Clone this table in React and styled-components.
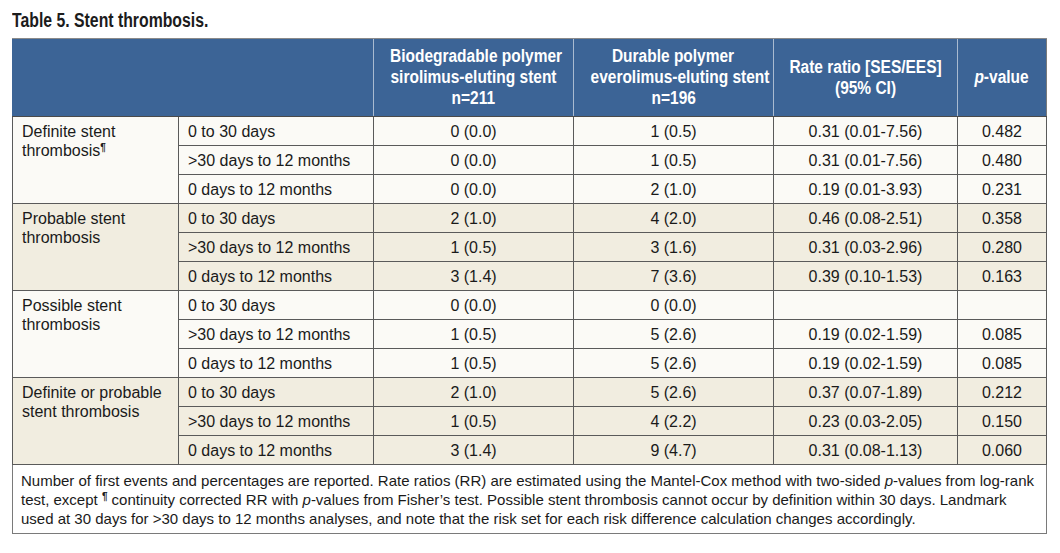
import React from "react";
import styled, { createGlobalStyle } from "styled-components";

const GlobalStyle = createGlobalStyle`
  html, body {
    margin: 0;
    padding: 0;
    background: #ffffff;
  }
  body {
    font-family: "Liberation Sans", Arial, sans-serif;
    color: #1a1a1a;
  }
`;

const Page = styled.div`
  width: 1060px;
  height: 553px;
  padding: 10px 12px 0 12px;
  box-sizing: border-box;
`;

const Title = styled.h1`
  margin: 0 0 7px 0;
  font-family: "Liberation Sans", Arial, sans-serif;
  font-weight: bold;
  font-size: 20px;
  line-height: 21px;
  color: #1c1c1c;
`;

// the source uses a condensed face; none is installed, so the text is squeezed
const Squeeze = styled.span`
  display: inline-block;
  white-space: nowrap;
  transform: scaleX(${(p) => p.$x || 0.86});
  transform-origin: ${(p) => (p.$origin === "left" ? "left center" : "center center")};
`;

const Table = styled.table`
  width: 1034px;
  border-collapse: collapse;
  table-layout: fixed;
  border: 1px solid #7a7a7a;
`;

const HeadCell = styled.th`
  background: #3c6496;
  color: #ffffff;
  height: 77px;
  padding: 0 2px;
  font-family: "Liberation Sans", Arial, sans-serif;
  font-weight: bold;
  font-size: 18px;
  line-height: 21px;
  text-align: center;
  vertical-align: middle;
  border-left: 1px solid ${(p) => (p.$noSep ? "#3c6496" : "#a9bad0")};
  border-bottom: 1px solid #4a4a4a;
  border-top: 1px solid #8a8a8a;
`;

const Cell = styled.td`
  background: ${(p) => (p.$shade ? "#f1ede0" : "#fbfaf6")};
  height: 28px;
  padding: 0 ${(p) => (p.$left ? "9px" : "4px")};
  font-size: 16px;
  line-height: 19px;
  text-align: ${(p) => (p.$left ? "left" : "center")};
  vertical-align: ${(p) => (p.$top ? "top" : "middle")};
  padding-top: ${(p) => (p.$top ? "5px" : "0")};
  border: 1px solid #5a5a5a;
  color: #1a1a1a;
`;

const Mark = styled.span`
  font-size: 10px;
  line-height: 1;
  position: relative;
  top: -5px;
  font-weight: bold;
`;

const Note = styled.td`
  background: #ffffff;
  border: 1px solid #7a7a7a;
  padding: 6px 8px 5px 8px;
  font-size: 15px;
  line-height: 19px;
  color: #1a1a1a;
`;

const periods = ["0 to 30 days", ">30 days to 12 months", "0 days to 12 months"];

const groups = [
  {
    label: (
      <>
        Definite stent
        <br />
        thrombosis<Mark>¶</Mark>
      </>
    ),
    rows: [
      ["0 (0.0)", "1 (0.5)", "0.31 (0.01-7.56)", "0.482"],
      ["0 (0.0)", "1 (0.5)", "0.31 (0.01-7.56)", "0.480"],
      ["0 (0.0)", "2 (1.0)", "0.19 (0.01-3.93)", "0.231"],
    ],
  },
  {
    label: (
      <>
        Probable stent
        <br />
        thrombosis
      </>
    ),
    rows: [
      ["2 (1.0)", "4 (2.0)", "0.46 (0.08-2.51)", "0.358"],
      ["1 (0.5)", "3 (1.6)", "0.31 (0.03-2.96)", "0.280"],
      ["3 (1.4)", "7 (3.6)", "0.39 (0.10-1.53)", "0.163"],
    ],
  },
  {
    label: (
      <>
        Possible stent
        <br />
        thrombosis
      </>
    ),
    rows: [
      ["0 (0.0)", "0 (0.0)", "", ""],
      ["1 (0.5)", "5 (2.6)", "0.19 (0.02-1.59)", "0.085"],
      ["1 (0.5)", "5 (2.6)", "0.19 (0.02-1.59)", "0.085"],
    ],
  },
  {
    label: (
      <>
        Definite or probable
        <br />
        stent thrombosis
      </>
    ),
    rows: [
      ["2 (1.0)", "5 (2.6)", "0.37 (0.07-1.89)", "0.212"],
      ["1 (0.5)", "4 (2.2)", "0.23 (0.03-2.05)", "0.150"],
      ["3 (1.4)", "9 (4.7)", "0.31 (0.08-1.13)", "0.060"],
    ],
  },
];

const HeadLines = ({ lines }) => (
  <>
    {lines.map((l, i) => (
      <React.Fragment key={i}>
        {i > 0 && <br />}
        <Squeeze $x={0.86}>{l}</Squeeze>
      </React.Fragment>
    ))}
  </>
);

export default function App() {
  return (
    <Page>
      <GlobalStyle />
      <Title>
        <Squeeze $x={0.79} $origin="left">
          Table 5. Stent thrombosis.
        </Squeeze>
      </Title>
      <Table>
        <colgroup>
          <col style={{ width: 166 }} />
          <col style={{ width: 195 }} />
          <col style={{ width: 200 }} />
          <col style={{ width: 200 }} />
          <col style={{ width: 184 }} />
          <col style={{ width: 89 }} />
        </colgroup>
        <thead>
          <tr>
            <HeadCell $noSep />
            <HeadCell $noSep />
            <HeadCell>
              <HeadLines lines={["Biodegradable polymer", "sirolimus-eluting stent", "n=211"]} />
            </HeadCell>
            <HeadCell>
              <HeadLines lines={["Durable polymer", "everolimus-eluting stent", "n=196"]} />
            </HeadCell>
            <HeadCell>
              <HeadLines lines={["Rate ratio [SES/EES]", "(95% CI)"]} />
            </HeadCell>
            <HeadCell>
              <Squeeze $x={0.86}>
                <i>p</i>-value
              </Squeeze>
            </HeadCell>
          </tr>
        </thead>
        <tbody>
          {groups.map((g, gi) =>
            g.rows.map((r, ri) => (
              <tr key={`${gi}-${ri}`}>
                {ri === 0 && (
                  <Cell rowSpan={3} $left $top $shade={gi % 2 === 1}>
                    {g.label}
                  </Cell>
                )}
                <Cell $left $shade={gi % 2 === 1}>
                  {periods[ri]}
                </Cell>
                {r.map((v, ci) => (
                  <Cell key={ci} $shade={gi % 2 === 1}>
                    {v}
                  </Cell>
                ))}
              </tr>
            ))
          )}
          <tr>
            <Note colSpan={6}>
              Number of first events and percentages are reported. Rate ratios (RR) are estimated
              using the Mantel-Cox method with two-sided <i>p</i>-values from log-rank test, except{" "}
              <Mark>¶</Mark> continuity corrected RR with <i>p</i>-values from Fisher’s test.
              Possible stent thrombosis cannot occur by definition within 30 days. Landmark used at
              30 days for &gt;30 days to 12 months analyses, and note that the risk set for each risk
              difference calculation changes accordingly.
            </Note>
          </tr>
        </tbody>
      </Table>
    </Page>
  );
}
